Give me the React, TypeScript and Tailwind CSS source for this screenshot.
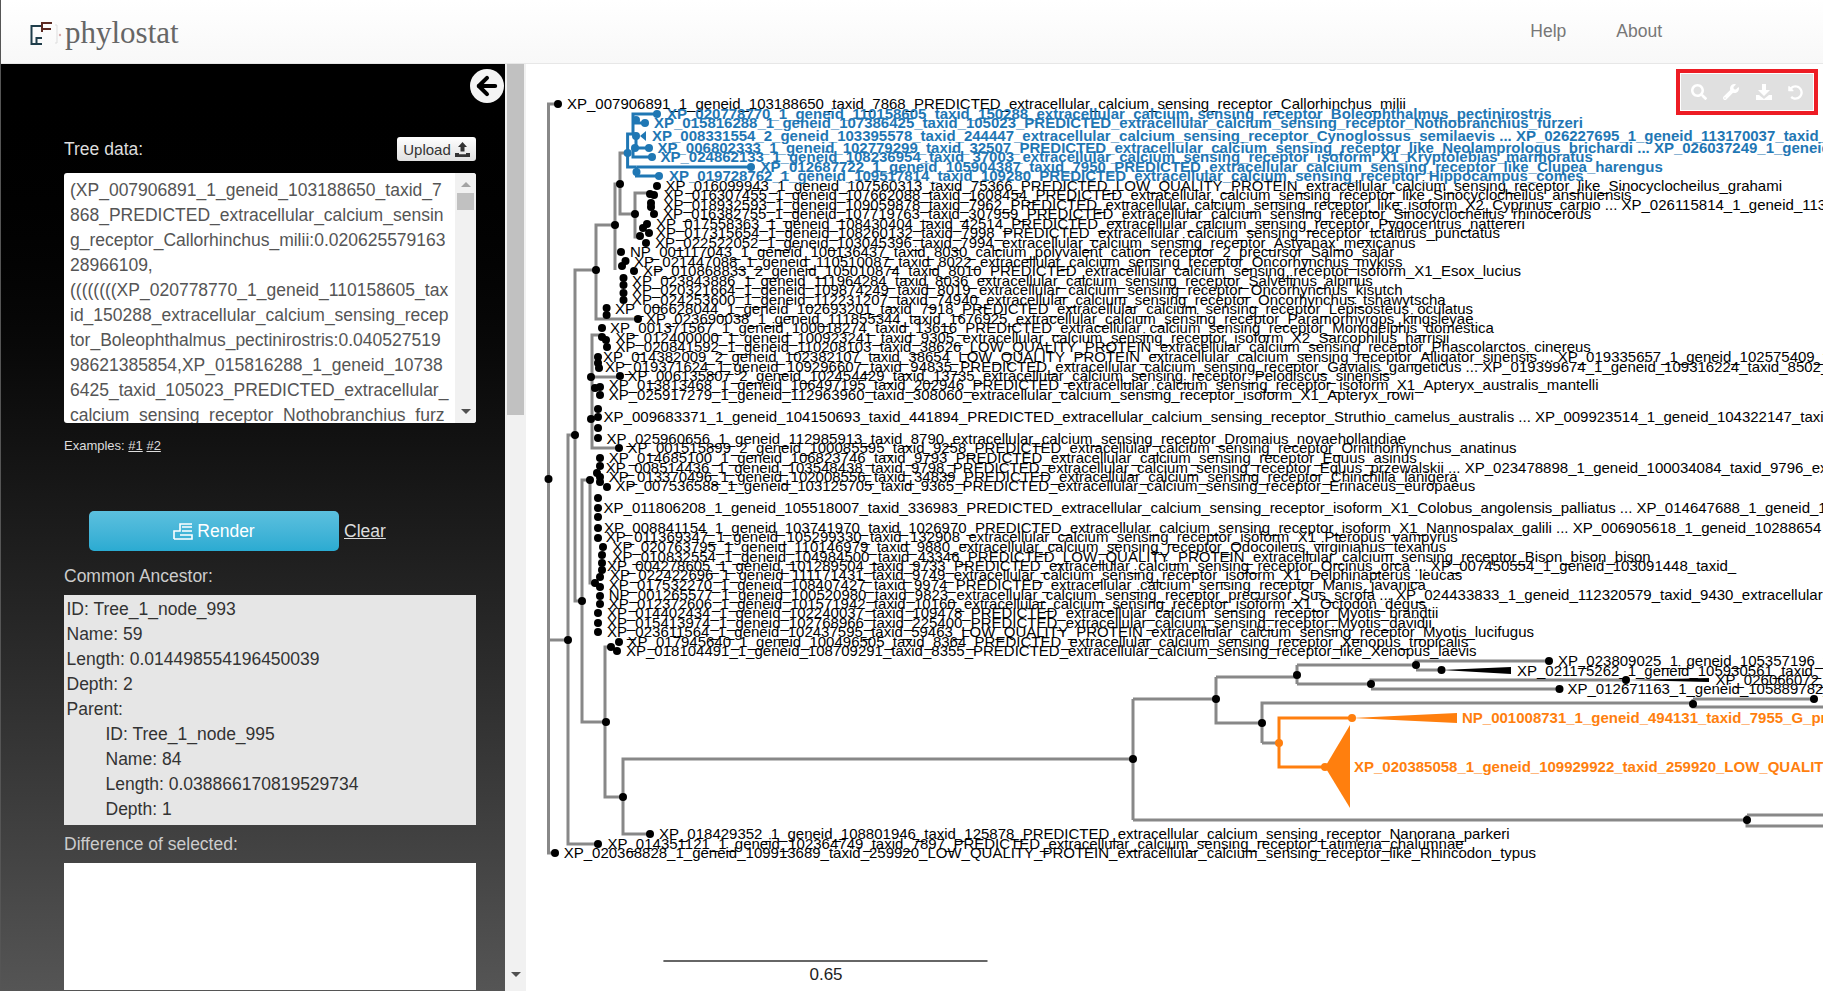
import { ArrowLeft } from 'lucide-react'
import { FaSearch, FaWrench, FaUndoAlt } from 'react-icons/fa'

const CR = 'extracellular_calcium_sensing_receptor'

// x, y (centre of the row), text
const blueLabels: [number, number, string][] = [
  [667, 114, `XP_020778770_1_geneid_110158605_taxid_150288_${CR}_Boleophthalmus_pectinirostris`],
  [654, 123, `XP_015816288_1_geneid_107386425_taxid_105023_PREDICTED_${CR}_Nothobranchius_furzeri`],
  [652, 136, `XP_008331554_2_geneid_103395578_taxid_244447_${CR}_Cynoglossus_semilaevis ... XP_026227695_1_geneid_113170037_taxid_244447_${CR}`],
  [657.5, 148, `XP_006802333_1_geneid_102779299_taxid_32507_PREDICTED_${CR}_like_Neolamprologus_brichardi ... XP_026037249_1_geneid_113036212`],
  [660.5, 157, `XP_024862133_1_geneid_108236954_taxid_37003_${CR}_isoform_X1_Kryptolebias_marmoratus`],
  [760.6, 167, `XP_012687722_1_geneid_105904387_taxid_7950_PREDICTED_${CR}_like_Clupea_harengus`],
  [669, 176, `XP_019728762_1_geneid_109517814_taxid_109280_PREDICTED_${CR}_Hippocampus_comes`],
]

const blackLabels: [number, number, string][] = [
  [567, 104, `XP_007906891_1_geneid_103188650_taxid_7868_PREDICTED_${CR}_Callorhinchus_milii`],
  [665.5, 186, `XP_016099943_1_geneid_107560313_taxid_75366_PREDICTED_LOW_QUALITY_PROTEIN_${CR}_like_Sinocyclocheilus_grahami`],
  [663.4, 195, `XP_016307455_1_geneid_107662088_taxid_1608454_PREDICTED_${CR}_like_Sinocyclocheilus_anshuiensis`],
  [663.4, 205, `XP_018932593_1_geneid_109059878_taxid_7962_PREDICTED_${CR}_like_isoform_X2_Cyprinus_carpio ... XP_026115814_1_geneid_113`],
  [663, 214, `XP_016382755_1_geneid_107719763_taxid_307959_PREDICTED_${CR}_Sinocyclocheilus_rhinocerous`],
  [656, 224, `XP_017558363_1_geneid_108430404_taxid_42514_PREDICTED_${CR}_Pygocentrus_nattereri`],
  [656, 233, `XP_017315654_1_geneid_108260132_taxid_7998_PREDICTED_${CR}_Ictalurus_punctatus`],
  [655, 243, `XP_022522052_1_geneid_103045396_taxid_7994_${CR}_Astyanax_mexicanus`],
  [630, 252, 'NP_001117043_1_geneid_100136437_taxid_8030_calcium_polyvalent_cation_receptor_2_precursor_Salmo_salar'],
  [634, 262, `XP_021447088_1_geneid_110510087_taxid_8022_${CR}_Oncorhynchus_mykiss`],
  [643, 271, `XP_010868833_2_geneid_105010874_taxid_8010_PREDICTED_${CR}_isoform_X1_Esox_lucius`],
  [632, 281, `XP_023843886_1_geneid_111964284_taxid_8036_${CR}_Salvelinus_alpinus`],
  [632, 290, `XP_020321664_1_geneid_109874249_taxid_8019_${CR}_Oncorhynchus_kisutch`],
  [632, 300, `XP_024253600_1_geneid_112231207_taxid_74940_${CR}_Oncorhynchus_tshawytscha`],
  [615, 309, `XP_006628044_1_geneid_102693201_taxid_7918_PREDICTED_${CR}_Lepisosteus_oculatus`],
  [646, 319, `XP_023690038_1_geneid_111855344_taxid_1676925_${CR}_Paramormyrops_kingsleyae`],
  [610, 328, `XP_001371567_1_geneid_100018274_taxid_13616_PREDICTED_${CR}_Monodelphis_domestica`],
  [615.5, 338, `XP_012400000_1_geneid_100923241_taxid_9305_${CR}_isoform_X2_Sarcophilus_harrisii`],
  [615.5, 347, `XP_020841592_1_geneid_110208103_taxid_38626_LOW_QUALITY_PROTEIN_${CR}_Phascolarctos_cinereus`],
  [603, 357, `XP_014382009_2_geneid_102382107_taxid_38654_LOW_QUALITY_PROTEIN_${CR}_Alligator_sinensis ... XP_019335657_1_geneid_102575409_taxid_8496`],
  [605, 367, `XP_019371624_1_geneid_109296607_taxid_94835_PREDICTED_${CR}_Gavialis_gangeticus ... XP_019399674_1_geneid_109316224_taxid_8502_`],
  [627.6, 376, `XP_006135807_2_geneid_102454429_taxid_13735_${CR}_Pelodiscus_sinensis`],
  [608.7, 385, `XP_013813468_1_geneid_106497195_taxid_202946_PREDICTED_${CR}_isoform_X1_Apteryx_australis_mantelli`],
  [608.7, 395, `XP_025917279_1_geneid_112963960_taxid_308060_${CR}_isoform_X1_Apteryx_rowi`],
  [603.6, 417, `XP_009683371_1_geneid_104150693_taxid_441894_PREDICTED_${CR}_Struthio_camelus_australis ... XP_009923514_1_geneid_104322147_taxid_`],
  [606.6, 439, `XP_025960656_1_geneid_112985913_taxid_8790_${CR}_Dromaius_novaehollandiae`],
  [627.6, 448, `XP_001515899_2_geneid_100085595_taxid_9258_PREDICTED_${CR}_Ornithorhynchus_anatinus`],
  [608.7, 458, `XP_014685100_1_geneid_106823746_taxid_9793_PREDICTED_${CR}_Equus_asinus`],
  [605.8, 468, `XP_008514436_1_geneid_103548438_taxid_9798_PREDICTED_${CR}_Equus_przewalskii ... XP_023478898_1_geneid_100034084_taxid_9796_ex`],
  [608.7, 477, `XP_013370496_1_geneid_102008556_taxid_34839_PREDICTED_${CR}_Chinchilla_lanigera`],
  [615.4, 486, `XP_007536588_1_geneid_103125705_taxid_9365_PREDICTED_${CR}_Erinaceus_europaeus`],
  [603.6, 508, `XP_011806208_1_geneid_105518007_taxid_336983_PREDICTED_${CR}_isoform_X1_Colobus_angolensis_palliatus ... XP_014647688_1_geneid_1`],
  [604, 528, `XP_008841154_1_geneid_103741970_taxid_1026970_PREDICTED_${CR}_isoform_X1_Nannospalax_galili ... XP_006905618_1_geneid_10288654`],
  [605.8, 537, `XP_011369347_1_geneid_105299330_taxid_132908_${CR}_isoform_X1_Pteropus_vampyrus`],
  [612.5, 547, `XP_020763795_1_geneid_110146979_taxid_9880_${CR}_Odocoileus_virginianus_texanus`],
  [612.5, 557, `XP_010832554_1_geneid_104984500_taxid_43346_PREDICTED_LOW_QUALITY_PROTEIN_${CR}_Bison_bison_bison`],
  [607, 566, `XP_004278605_1_geneid_101289504_taxid_9733_PREDICTED_${CR}_Orcinus_orca ... XP_007450554_1_geneid_103091448_taxid_`],
  [610, 575, `XP_022422696_1_geneid_111171431_taxid_9749_${CR}_isoform_X1_Delphinapterus_leucas`],
  [608.7, 585, `XP_017532270_1_geneid_108407427_taxid_9974_PREDICTED_${CR}_Manis_javanica`],
  [608.7, 595, `NP_001265577_1_geneid_100520980_taxid_9823_${CR}_precursor_Sus_scrofa ... XP_024433833_1_geneid_112320579_taxid_9430_extracellular`],
  [608.7, 604, `XP_012372606_1_geneid_101571942_taxid_10160_${CR}_isoform_X1_Octodon_degus`],
  [607, 613, `XP_014402434_1_geneid_102240037_taxid_109478_PREDICTED_${CR}_Myotis_brandtii`],
  [607, 623, `XP_015413974_1_geneid_102768966_taxid_225400_PREDICTED_${CR}_Myotis_davidii`],
  [607, 632, `XP_023611564_1_geneid_102437595_taxid_59463_LOW_QUALITY_PROTEIN_${CR}_Myotis_lucifugus`],
  [627.6, 642, `XP_017945640_1_geneid_100496505_taxid_8364_PREDICTED_${CR}_Xenopus_tropicalis`],
  [626, 651, `XP_018104491_1_geneid_108709291_taxid_8355_PREDICTED_${CR}_like_Xenopus_laevis`],
  [1558, 661, 'XP_023809025_1_geneid_105357196_taxid_'],
  [1517, 671, 'XP_021175262_1_geneid_105930561_taxid_'],
  [1715.5, 680, 'XP_026066072_1_geneid'],
  [1567.5, 689, 'XP_012671163_1_geneid_105889782_taxid_'],
  [659, 834, `XP_018429352_1_geneid_108801946_taxid_125878_PREDICTED_${CR}_Nanorana_parkeri`],
  [607.5, 844, `XP_014351121_1_geneid_102364749_taxid_7897_PREDICTED_${CR}_Latimeria_chalumnae`],
  [563.7, 853, `XP_020368828_1_geneid_109913689_taxid_259920_LOW_QUALITY_PROTEIN_${CR}_like_Rhincodon_typus`],
]

const orangeLabels: [number, number, string][] = [
  [1462, 718, 'NP_001008731_1_geneid_494131_taxid_7955_G_protein_coupled_receptor'],
  [1354, 767, 'XP_020385058_1_geneid_109929922_taxid_259920_LOW_QUALITY_PROTEIN'],
]

const greyPaths = [
  'M558 104H548.5V853H555',
  'M548.5 640H568',
  'M575 435H568V844H598',
  'M596 270H575V601H582',
  'M615 225H596V319H638',
  'M620 184H615V270',
  'M627.6 153H620V214H635',
  'M648 193H635V237H640',
  'M601 335H592V448H619',
  'M592 377H620',
  'M590 480H582V722H606',
  'M590 480V583H595',
  'M611 647H605V797H623',
  'M650 834H623V759H1133',
  'M1133 699V820',
  'M1133 699H1216',
  'M1216 677V723H1262',
  'M1216 677H1297',
  'M1297 665V684',
  'M1297 665H1416V661H1549',
  'M1416 670H1441.5',
  'M1297 684H1371V680H1626',
  'M1371 689H1559.5',
  'M1262 743V703H1693',
  'M1693 699H1814',
  'M1693 699V707H1823',
  'M1262 743H1279',
  'M1133 820H1747',
  'M1747 815H1823',
  'M1747 815V826H1823',
]

const bluePaths = [
  'M627.6 153V134H636',
  'M627.6 153V167H636.5',
  'M633 134V114H657',
  'M633 123H645',
  'M636 136V148H649',
  'M633 148V157H652',
  'M636.5 167H751',
  'M636.5 167V176H659',
]

const orangePaths = ['M1352 718H1279V767H1325']

const blackNodes = [
  [558, 104], [548.5, 479], [568, 640], [575, 435], [596, 270], [615, 225], [620, 184], [635, 214],
  [657, 186], [650, 194], [654, 195], [651, 203], [651, 207], [654, 214], [647, 224], [643, 228], [649, 233], [640, 236], [646, 243],
  [621, 252], [625.5, 261], [622, 266], [634, 271], [623.5, 278], [623.5, 285], [623.5, 293], [623.5, 300],
  [606.6, 308], [606.6, 315], [638, 319],
  [602, 328], [602, 337], [606, 340], [607, 347], [598, 357], [598, 363], [599, 368], [591, 377], [620, 376],
  [595, 388], [600, 387], [600, 395], [598, 409], [598, 417], [591, 419], [598, 428], [598, 438], [619, 448],
  [600, 458], [600, 466], [597, 473], [600, 477], [590, 480], [600, 482], [607, 487], [598, 498],
  [598, 508], [598, 517], [598, 528], [598, 538], [603, 547], [602, 555], [602, 563], [602, 570], [600, 577], [595, 583],
  [600, 587], [600, 596], [600, 604], [598, 613], [598, 623], [598, 632], [582, 601], [619, 642], [617, 651], [611, 647],
  [606, 722], [623, 797], [650, 834], [598, 844], [555, 853],
  [1133, 759], [1216, 699], [1297, 675], [1262, 723], [1416, 665], [1371, 684], [1549, 661], [1441.5, 670], [1626, 680], [1559.5, 689],
  [1693, 704], [1814, 699], [1747, 820],
]

const blueNodes = [[627.6, 153], [657, 114], [645, 123], [636, 120], [636, 136], [635, 148], [649, 148], [652, 157], [636.5, 172], [751, 167], [659, 176]]
const orangeNodes = [[1279, 743], [1352, 718], [1325, 767]]

function TreeChart() {
  return (
    <svg viewBox="526 64 1297 927" className="w-full h-full block" style={{ fontFamily: '"Liberation Sans", Arial, sans-serif' }}>
      <g fill="none" stroke="#888888" strokeWidth="3">
        {greyPaths.map((d) => <path key={d} d={d} />)}
      </g>
      <g fill="none" stroke="#1f77b4" strokeWidth="3">
        {bluePaths.map((d) => <path key={d} d={d} />)}
      </g>
      <g fill="none" stroke="#ff7f0e" strokeWidth="3">
        {orangePaths.map((d) => <path key={d} d={d} />)}
      </g>
      <path d="M1441.5 670L1511 667V674Z" fill="#000" />
      <path d="M1626 680L1709 678V682Z" fill="#000" />
      <path d="M1352 718L1457 713V723Z" fill="#ff7f0e" />
      <path d="M1325 767L1350 725V808Z" fill="#ff7f0e" />
      <path d="M640 136L646 131V141Z" fill="#1f77b4" />
      {blackNodes.map(([x, y]) => <circle key={`${x}-${y}`} cx={x} cy={y} r="4" fill="#000" />)}
      {blueNodes.map(([x, y]) => <circle key={`${x}-${y}`} cx={x} cy={y} r="4" fill="#1f77b4" />)}
      {orangeNodes.map(([x, y]) => <circle key={`${x}-${y}`} cx={x} cy={y} r="4" fill="#ff7f0e" />)}
      {blackLabels.map(([x, y, t]) => <text key={t} x={x} y={y + 5} fontSize="15" fill="#000">{t}</text>)}
      {blueLabels.map(([x, y, t]) => <text key={t} x={x} y={y + 5} fontSize="15" fontWeight="700" fill="#1f77b4">{t}</text>)}
      {orangeLabels.map(([x, y, t]) => <text key={t} x={x} y={y + 5} fontSize="15" fontWeight="700" fill="#ff7f0e">{t}</text>)}
      <path d="M663.4 961H987.5" stroke="#666" strokeWidth="2" />
      <text x="826" y="980" fontSize="17" textAnchor="middle" fill="#222">0.65</text>
    </svg>
  )
}

function Logo() {
  return (
    <svg width="35" height="26" viewBox="0 0 35 26" className="block" fill="none">
      <path d="M12 7H1.5V25H12M12 19H6.5V24" stroke="#1f3d4a" strokeWidth="2" />
      <path d="M12 13V4H22M12 10H21" stroke="#5c2a22" strokeWidth="2" />
      <path d="M25 6H27V24H25" stroke="#ddd" strokeWidth="1" />
      <circle cx="30" cy="16" r="1.2" fill="#d8a8a8" />
    </svg>
  )
}

const treeLines = [
  '(XP_007906891_1_geneid_103188650_taxid_7',
  '868_PREDICTED_extracellular_calcium_sensin',
  'g_receptor_Callorhinchus_milii:0.020625579163',
  '28966109,',
  '((((((((XP_020778770_1_geneid_110158605_tax',
  'id_150288_extracellular_calcium_sensing_recep',
  'tor_Boleophthalmus_pectinirostris:0.040527519',
  '98621385854,XP_015816288_1_geneid_10738',
  '6425_taxid_105023_PREDICTED_extracellular_',
  'calcium_sensing_receptor_Nothobranchius_furz',
]

export default function App() {
  return (
    <div className="h-[991px] w-full overflow-hidden flex flex-col bg-white text-[17.5px] leading-[25px] border-l border-[#555]" style={{ fontFamily: '"Liberation Sans", Arial, sans-serif' }}>
      <header className="h-[64px] shrink-0 flex items-center justify-between pl-[29px] bg-gradient-to-b from-white to-[#f8f8f8] border-b border-[#e7e7e7]">
        <div className="flex items-center">
          <Logo />
          <span className="text-[31px] text-[#666] leading-none pt-[2px]" style={{ fontFamily: '"Liberation Serif", serif' }}>phylostat</span>
        </div>
        <nav className="flex gap-[50px] pr-[161px] text-[#777]">
          <a href="#">Help</a>
          <a href="#">About</a>
        </nav>
      </header>

      <div className="flex-1 flex min-h-0">
        <aside className="w-[504px] shrink-0 relative bg-gradient-to-b from-black to-[#555] pl-[63px] pr-[29px] pt-[73px]">
          <button className="absolute top-[5px] right-[1px] w-[34px] h-[34px] rounded-full bg-[#f4f4f4] flex items-center justify-center">
            <ArrowLeft size={28} strokeWidth={3.5} color="#000" />
          </button>

          <div className="flex items-center justify-between h-[24px] text-[#ddd]">
            <span>Tree data:</span>
            <button className="h-[24px] w-[79px] rounded-[3px] bg-gradient-to-b from-white to-[#e0e0e0] text-[#333] text-[15px] flex items-center justify-center gap-[4px]">
              Upload
              <svg width="15" height="15" viewBox="0 0 15 15" fill="#333">
                <path d="M7.5 0L12 5H9.5V9.5H5.5V5H3ZM0 11H4V12.2H11V11H15V15H0Z" />
              </svg>
            </button>
          </div>

          <div className="mt-[12px] h-[250px] bg-white rounded-[3px] flex overflow-hidden">
            <div className="flex-1 overflow-hidden pl-[6px] pt-[5px] text-[#555] whitespace-nowrap">
              {treeLines.map((l) => <div key={l}>{l}</div>)}
            </div>
            <div className="w-[21px] shrink-0 bg-[#f1f1f1] flex flex-col items-center pt-[9px] pb-[9px]">
              <div className="w-0 h-0 border-x-[5px] border-x-transparent border-b-[5px] border-b-[#a3a3a3]" />
              <div className="mt-[6px] w-[17px] h-[17px] bg-[#c1c1c1]" />
              <div className="mt-auto w-0 h-0 border-x-[5px] border-x-transparent border-t-[5px] border-t-[#505050]" />
            </div>
          </div>

          <div className="mt-[14px] h-[18px] text-[13px] leading-[18px] text-[#ddd]">
            Examples: <a href="#" className="underline">#1</a> <a href="#" className="underline">#2</a>
          </div>

          <div className="mt-[56px] flex items-center pl-[25px] h-[40px]">
            <button className="w-[250px] h-[40px] rounded-[5px] bg-gradient-to-b from-[#5bc0de] to-[#2aabd2] text-white flex items-center justify-center gap-[4px]">
              <svg width="20" height="18" viewBox="0 0 20 18" fill="none" stroke="#fff" strokeWidth="1.6">
                <path d="M1 17V9H7V2H19M9 5H19M9 9H19M1 17H19V13H7" />
              </svg>
              Render
            </button>
            <a href="#" className="ml-[5px] underline text-[#ddd]">Clear</a>
          </div>

          <div className="mt-[13px] h-[25px] text-[#ccc]">Common Ancestor:</div>
          <div className="mt-[6px] h-[230px] bg-[#e6e6e6] text-[#333] pl-[2.5px] pt-[2px]">
            <div>ID: Tree_1_node_993</div>
            <div>Name: 59</div>
            <div>Length: 0.014498554196450039</div>
            <div>Depth: 2</div>
            <div>Parent:</div>
            <div className="pl-[39px]">
              <div>ID: Tree_1_node_995</div>
              <div>Name: 84</div>
              <div>Length: 0.038866170819529734</div>
              <div>Depth: 1</div>
            </div>
          </div>

          <div className="mt-[7px] h-[25px] text-[#ccc]">Difference of selected:</div>
          <div className="mt-[6px] h-[127px] bg-white" />
        </aside>

        <div className="w-[21px] shrink-0 bg-[#f1f1f1] flex flex-col items-center">
          <div className="w-[17px] h-[351px] bg-[#c1c1c1]" />
          <div className="mt-auto mb-[14px] w-0 h-0 border-x-[5px] border-x-transparent border-t-[5px] border-t-[#505050]" />
        </div>

        <main className="flex-1 relative min-w-0">
          <TreeChart />
          <div className="absolute top-[5px] right-[5px] w-[142px] h-[46px] border-4 border-[#ed1c24] p-[1px]">
            <div className="h-full bg-[#e0e0e0] flex items-center justify-around px-[2px] text-white">
              <FaSearch size={16} />
              <FaWrench size={16} />
              <svg width="16" height="16" viewBox="0 0 16 16" fill="#fff">
                <path d="M6 0H10V6H14L8 12L2 6H6ZM0 11H3L8 15L13 11H16V16H0Z" />
              </svg>
              <FaUndoAlt size={15} />
            </div>
          </div>
        </main>
      </div>
    </div>
  )
}
